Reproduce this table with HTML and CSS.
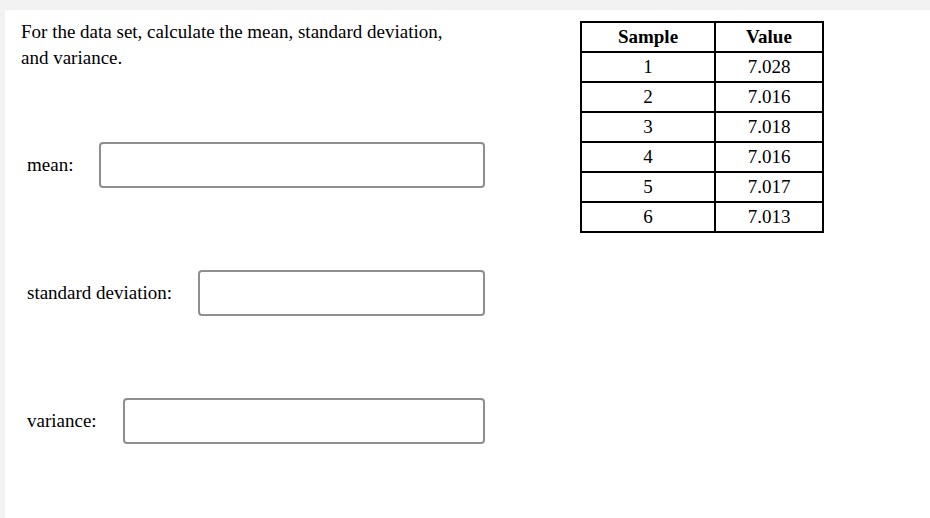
FILE: index.html
```html
<!DOCTYPE html>
<html>
<head>
<meta charset="utf-8">
<link rel="stylesheet" href="styles.css">
</head>
<body>
<div class="panel">
  <div class="left">
    <p class="question">For the data set, calculate the mean, standard deviation, and variance.</p>
    <div class="field field-mean">
      <label class="label">mean:</label>
      <input class="box" type="text">
    </div>
    <div class="field field-sd">
      <label class="label">standard deviation:</label>
      <input class="box" type="text">
    </div>
    <div class="field field-var">
      <label class="label">variance:</label>
      <input class="box" type="text">
    </div>
  </div>
  <table class="data">
    <thead>
      <tr><th class="c1">Sample</th><th class="c2">Value</th></tr>
    </thead>
    <tbody>
      <tr><td>1</td><td>7.028</td></tr>
      <tr><td>2</td><td>7.016</td></tr>
      <tr><td>3</td><td>7.018</td></tr>
      <tr><td>4</td><td>7.016</td></tr>
      <tr><td>5</td><td>7.017</td></tr>
      <tr><td>6</td><td>7.013</td></tr>
    </tbody>
  </table>
</div>
</body>
</html>
```

FILE: styles.css
```css
html, body {
  margin: 0;
  padding: 0;
  background: #f2f2f2;
  height: 100%;
}
body {
  font-family: "Liberation Serif", "Times New Roman", serif;
  color: #000;
  overflow: hidden;
}
.panel {
  margin: 10px 0 0 5px;
  height: 508px;
  background: #fff;
  display: flex;
  align-items: flex-start;
  gap: 95px;
}
.left {
  width: 464px;
  padding: 9px 0 0 16px;
  display: flex;
  flex-direction: column;
}
.question {
  margin: 0;
  width: 445px;
  font-size: 19px;
  line-height: 26px;
}
.field {
  display: flex;
  align-items: center;
  gap: 26px;
  padding-left: 6px;
  height: 46px;
}
.field-mean { margin-top: 71px; }
.field-sd { margin-top: 82px; }
.field-var { margin-top: 82px; }
.label {
  font-size: 19px;
  white-space: nowrap;
}
.box {
  flex: 1;
  min-width: 0;
  height: 46px;
  box-sizing: border-box;
  border: 2px solid #8f8f8f;
  border-radius: 4px;
  background: #fff;
  margin: 0;
  padding: 0 8px;
  outline: none;
}
.data {
  margin-top: 11px;
  border-collapse: collapse;
  border: 2px solid #000;
  font-size: 19px;
  width: 244px;
}
.data th, .data td {
  border: 2px solid #000;
  text-align: center;
  padding: 0;
  height: 28px;
  line-height: 22px;
}
.data th { font-weight: bold; }
.data .c1 { width: 132px; }
.data .c2 { width: 106px; }
```
